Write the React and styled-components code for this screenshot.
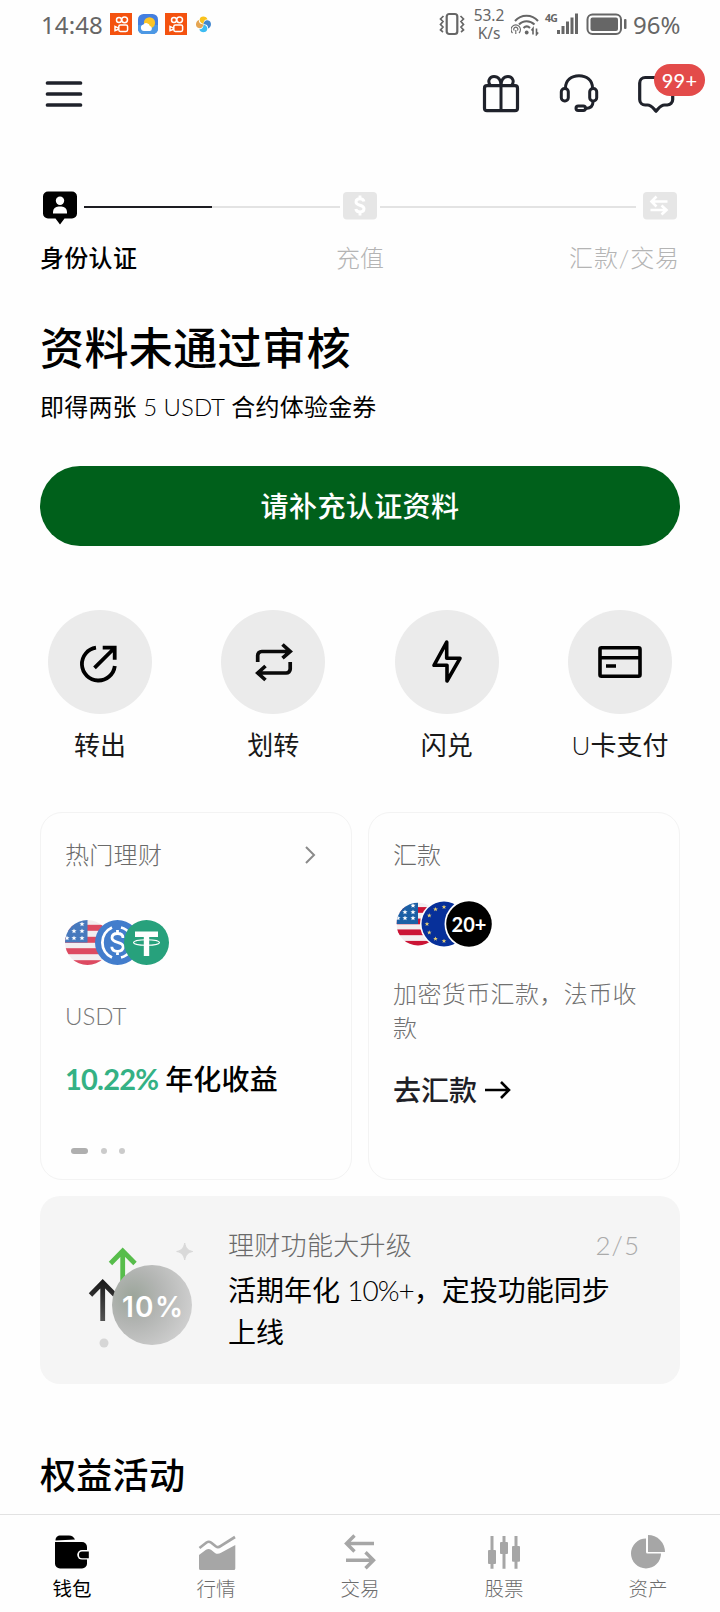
import React from "react";
import styled, { createGlobalStyle } from "styled-components";

const GlobalStyle = createGlobalStyle`
  * { box-sizing: border-box; }
  body {
    margin: 0;
    background: #fefefe;
    color: #000;
    font-family: Lato, "Noto Sans CJK SC", sans-serif;
  }
`;

const Screen = styled.div`
  width: 720px;
  height: 1612px;
  display: flex;
  flex-direction: column;
  background: #fefefe;
  overflow: hidden;
`;

const Text = styled.div`
  font-size: ${(p) => p.$size || 24}px;
  line-height: ${(p) => p.$line || 34}px;
  font-weight: ${(p) => p.$weight || 400};
  letter-spacing: ${(p) => p.$track || 0}px;
  color: ${(p) => p.$color || "#000"};
  white-space: nowrap;
`;

/* Status bar */
const StatusBar = styled.div`
  height: 48px;
  padding: 0 38px 0 41px;
  display: flex;
  align-items: center;
  justify-content: space-between;
  color: #666;
  font-family: "Noto Sans", sans-serif;
  font-size: 24px;
`;
const StatusGroup = styled.div`
  display: flex;
  align-items: center;
  gap: ${(p) => p.$gap}px;
`;
const Clock = styled.span`
  width: 62px;
  letter-spacing: 0.1px;
`;
const Percent = styled.span`
  width: 49px;
`;
const Speed = styled.span`
  width: 32px;
  font-size: 15.5px;
  line-height: 18px;
  letter-spacing: -0.1px;
  text-align: center;
`;

/* Header */
const Header = styled.header`
  height: 92px;
  padding: 0 40px;
  display: flex;
  align-items: center;
  justify-content: space-between;
`;
const HeaderActions = styled.div`
  display: flex;
  gap: 29.5px;
`;
const IconHolder = styled.div`
  position: relative;
  width: 48px;
  height: 48px;
`;
const Badge = styled.span`
  position: absolute;
  left: 22px;
  top: -6px;
  width: 51px;
  height: 32px;
  border-radius: 16px;
  background: #e34b4a;
  color: #fff;
  font-weight: 500;
  font-size: 20px;
  line-height: 32px;
  letter-spacing: 0.2px;
  text-align: center;
`;

const Stepper = styled.section`
  padding: 51px 43px 0;
`;
const StepTrack = styled.div`
  height: 34px;
  display: flex;
  align-items: flex-start;
`;
const StepLine = styled.span`
  flex: 1;
  height: 2px;
  margin: 15px ${(p) => p.$right}px 0 ${(p) => p.$left}px;
  background: linear-gradient(to right, #1d1d22 ${(p) => p.$done}%, #e3e3e3 ${(p) => p.$done}%);
`;
const StepLabels = styled.div`
  margin: 16px -3px 0;
  display: grid;
  grid-template-columns: 1fr auto 1fr;
  & > :last-child { justify-self: end; }
`;

const Hero = styled.section`
  padding: 0 40px;
  margin-top: 43px;
`;
const Title = styled.h1`
  margin: 0;
  font-size: 44px;
  line-height: 60px;
  font-weight: 500;
  letter-spacing: 0.4px;
`;
const Subtitle = styled.p`
  margin: 12px 0 0;
  font-size: 24px;
  line-height: 34px;
  letter-spacing: 0.2px;
`;
const Latin = styled.span`
  font-weight: 300;
  letter-spacing: ${(p) => p.$track || 0}px;
`;
const PrimaryButton = styled.button`
  display: block;
  width: 100%;
  height: 80px;
  margin-top: 42px;
  padding: 0 6px 3px;
  border: 0;
  border-radius: 40px;
  background: #00601b;
  color: #fff;
  font-family: inherit;
  font-size: 28px;
  font-weight: 500;
  letter-spacing: 0.4px;
`;

const Shortcuts = styled.nav`
  margin-top: 64px;
  padding: 0 40px;
  display: flex;
  justify-content: space-between;
`;
const Shortcut = styled.div`
  width: 120px;
  display: flex;
  flex-direction: column;
  align-items: center;
  gap: 13px;
`;
const Disc = styled.div`
  width: 104px;
  height: 104px;
  border-radius: 50%;
  background: #ebebeb;
  display: grid;
  place-items: center;
`;

const Cards = styled.section`
  margin-top: 49px;
  padding: 0 40px;
  display: grid;
  grid-template-columns: 1fr 1fr;
  gap: 16px;
`;
const Card = styled.article`
  height: 368px;
  border: 1.5px solid #f3f3f3;
  border-radius: 22px;
  padding: 25px 24px 0;
  display: flex;
  flex-direction: column;
`;
const CardHead = styled.div`
  display: flex;
  justify-content: space-between;
  align-items: center;
  padding-right: 11px;
`;
const Coins = styled.svg`
  display: block;
  margin: ${(p) => p.$top}px 0 0 ${(p) => p.$left}px;
`;
const Spaced = styled.div`
  margin-top: ${(p) => p.$top}px;
  display: flex;
  align-items: center;
  gap: ${(p) => p.$gap || 0}px;
`;
const Pager = styled.div`
  margin: 49px 0 0 6px;
  display: flex;
`;
const Dot = styled.span`
  width: ${(p) => (p.$active ? 17 : 6)}px;
  height: 6px;
  margin-right: 12.5px;
  border-radius: 3px;
  background: ${(p) => (p.$active ? "#afafaf" : "#cbcbcb")};
`;

const Banner = styled.section`
  height: 188px;
  margin: 16px 40px 0;
  padding: 32px 40px 0;
  border-radius: 20px;
  background: #f5f5f5;
  display: flex;
`;
const BannerArt = styled.svg`
  flex: none;
  margin: 8px 28px 0 0;
`;
const BannerBody = styled.div`
  flex: 1;
`;
const BannerHead = styled.div`
  display: flex;
  justify-content: space-between;
`;

const SectionTitle = styled.h2`
  margin: 66px 40px 0;
  font-size: 36px;
  line-height: 50px;
  font-weight: 500;
  letter-spacing: 0.3px;
`;

const TabBar = styled.nav`
  margin-top: auto;
  height: 98px;
  border-top: 1px solid #e2e2e2;
  display: grid;
  grid-template-columns: repeat(5, 1fr);
`;
const Tab = styled.div`
  padding-top: 17px;
  display: flex;
  flex-direction: column;
  align-items: center;
`;

function VideoAppIcon() {
  return (
    <svg width="22" height="22" viewBox="0 0 22 22">
      <rect width="22" height="22" fill="#f4520f" />
      <g fill="none" stroke="#fff" strokeWidth="1.5">
        <circle cx="9" cy="7" r="2.5" />
        <circle cx="14.6" cy="6.8" r="2.9" />
        <rect x="8.8" y="12" width="8.8" height="6.4" rx="1.6" />
        <path d="M8.5 15.2L5 13.4v4.3l3.5-1.5" />
      </g>
    </svg>
  );
}
function WeatherIcon() {
  return (
    <svg width="20" height="20" viewBox="0 0 20 20">
      <rect width="20" height="20" rx="5.5" fill="#437fe0" />
      <path d="M0 11h20v3.500a5.500 5.500 0 0 1-5.500 5.500h-9A5.500 5.500 0 0 1 0 14.500z" fill="#4c98e4" />
      <circle cx="11.500" cy="8.800" r="5.600" fill="#fcc526" />
      <path d="M6 17a3.300 3.300 0 0 1-.6-6.500 3.700 3.700 0 0 1 6.500 1.500 2.600 2.600 0 0 1 .2 5z" fill="#fff" />
    </svg>
  );
}
function PinwheelIcon() {
  return (
    <svg width="19" height="17" viewBox="-2 0 19 17">
      <path d="M8.500 8C5 7 3.500 4 5.500 1.500 7.500-.5 12 .3 12.500 3.500 10 3 8.500 5 8.500 8z" fill="#f9c21c" />
      <path d="M8.500 8c.5-3.500 3.500-4.800 6-3 2.500 2 1.700 6.500-1.500 7.500C13.500 9.800 11.500 8.300 8.500 8z" fill="#3f86d0" />
      <path d="M8.500 8.500c3.500 1 5 4 3 6.500-2 2-6.500 1.500-7.200-1.800C7 13.500 8.500 11.500 8.500 8.500z" fill="#3dbcf2" />
      <path d="M8.500 8.500C8 12 5 13 2.500 11.500 0 9.500.8 5 4 4 3.500 6.700 5.500 8.200 8.500 8.500z" fill="#e5a552" />
    </svg>
  );
}
function VibrateIcon() {
  return (
    <svg width="28" height="24" viewBox="0 0 28 24" fill="none" stroke="#666" strokeWidth="2">
      <rect x="7.700" y="2" width="10.600" height="20" rx="2.500" strokeWidth="2.200" />
      <path d="M4.500 4L1.500 7l2.500 2.500-2.500 3 2.500 2.500-2.500 3 2.500 2M21.500 4l3 3-2.500 2.500 2.500 3-2.500 2.500 2.500 3-2.500 2" strokeWidth="1.700" />
    </svg>
  );
}
function WifiIcon() {
  return (
    <svg width="28" height="24" viewBox="0 0 28 24" fill="none" stroke="#666" strokeWidth="2">
      <path d="M4 9C10 2 21 2 27 9M8 12.500c4-4.500 11-4.500 15.500 0M12.500 16c2-2 4.500-2 6.500 0" />
      <circle cx="15.700" cy="20.500" r="1.900" fill="#666" stroke="none" />
      <g strokeWidth="1.100">
        <path d="M1.500 21a4.700 4.700 0 1 1 6.500 0M3.300 18.500a2 2 0 1 1 3 0M4.800 18v4" />
        <path d="M22 22.500v-6l-1.500 2M25.500 16.500v6l1.700-2" strokeWidth="1.600" />
      </g>
    </svg>
  );
}
const Carrier = styled.div`
  width: 35px;
  height: 24px;
  display: flex;
  align-items: flex-start;
  font-family: "Noto Sans", sans-serif;
`;
const CarrierTag = styled.span`
  width: 12px;
  font-size: 10.5px;
  line-height: 13px;
  font-weight: 700;
  letter-spacing: -0.8px;
`;
function SignalIcon() {
  return (
    <svg width="22" height="24" viewBox="0 0 22 24" fill="#666">
      <rect x="0" y="18" width="3" height="4" />
      <rect x="4.500" y="14" width="3" height="8" />
      <rect x="9" y="9.500" width="3" height="12.500" />
      <rect x="13.500" y="5.500" width="3" height="16.500" />
      <rect x="18" y="1.500" width="3" height="20.500" />
    </svg>
  );
}
function BatteryIcon() {
  return (
    <svg width="41" height="24" viewBox="0 0 41 24">
      <rect x="1.500" y="2.500" width="33.500" height="19.500" rx="5" fill="none" stroke="#666" strokeWidth="2" />
      <rect x="4.500" y="5.500" width="27.500" height="13.500" rx="2" fill="#666" />
      <rect x="38" y="7" width="2.500" height="10" rx="1" fill="#666" />
    </svg>
  );
}

const LineIcon = styled.svg.attrs({ width: 48, height: 48, viewBox: "0 0 48 48" })`
  display: block;
  fill: none;
  stroke: ${(p) => p.$color || "#1f222b"};
  stroke-width: ${(p) => p.$stroke || 3.2};
`;

function PersonStep() {
  return (
    <svg width="34" height="34" viewBox="0 0 34 34">
      <path d="M5 .5h24a5 5 0 0 1 5 5v17a5 5 0 0 1-5 5h-7.500L17 33.500 12.500 27.500H5a5 5 0 0 1-5-5v-17a5 5 0 0 1 5-5z" />
      <circle cx="17" cy="9.800" r="4.200" fill="#fff" />
      <path d="M10 22.500v-1.500a5.500 5.500 0 0 1 5.500-5.500h3a5.500 5.500 0 0 1 5.500 5.500v1.500z" fill="#fff" />
    </svg>
  );
}
function MoneyStep() {
  return (
    <svg width="34" height="34" viewBox="0 0 34 34">
      <rect y="1" width="34" height="27.500" rx="4" fill="#e6e6e6" />
      <path d="M21 10.500c-.5-2-2-2.700-4-2.700-2.300 0-4 1-4 3.200 0 4.500 8 2 8 6.800 0 2.200-1.800 3.200-4 3.200s-3.800-.9-4.200-3M17 4.500v3.300M17 21v3.500" fill="none" stroke="#fff" strokeWidth="2.900" />
    </svg>
  );
}
function TradeStep() {
  return (
    <svg width="34" height="34" viewBox="0 0 34 34">
      <rect y="1" width="34" height="27.500" rx="4" fill="#e6e6e6" />
      <path d="M24.500 10.500h-15M13.500 5.500l-5 5 5 5M7.500 19h15M18.500 14.500l5 4.500-5 4.500" fill="none" stroke="#fff" strokeWidth="2.600" />
    </svg>
  );
}

const star = "M0-2.600L.7-.8 2.600-.8 1.100.4 1.600 2.200 0 1.200-1.600 2.200-1.100.4-2.600-.8-.7-.8z";

function UsFlag({ cx, cy, r, id, red, blue, stars }) {
  const h = (2 * r) / 7.5;
  return (
    <g>
      <clipPath id={id}><circle cx={cx} cy={cy} r={r} /></clipPath>
      <g clipPath={`url(#${id})`}>
        <rect x={cx - r} y={cy - r} width={2 * r} height={2 * r} fill="#f3eef0" />
        {[0.8, 2.8, 4.700, 6.700].map((n) => (
          <rect key={n} x={cx - r} y={cy - r + n * h} width={2 * r} height={h} fill={red} />
        ))}
        <rect x={cx - r} y={cy - r} width={r} height={r} fill={blue} />
        {stars.map(([x, y], i) => (
          <path key={i} d={star} transform={`translate(${x} ${y})`} fill="#fff" />
        ))}
      </g>
    </g>
  );
}

function EarnCoins() {
  return (
    <Coins width="104" height="46" viewBox="0 0 104 46" $top={48} $left={-0.5}>
      <UsFlag cx={22.500} cy={22.500} r={22.500} id="earn-us" red="#dd4a61" blue="#4779bd"
        stars={[[9, 11], [17, 4], [17, 11], [9, 18], [17, 18], [2, 18]]} />
      <circle cx="52.500" cy="22.500" r="22.500" fill="#427dcc" />
      <g fill="none" stroke="#fff" strokeWidth="2.800">
        <path d="M47 7.500a16.500 16.500 0 0 0 0 30M56 7.500a16.500 16.500 0 0 1 9 6M56 37.500a16.500 16.500 0 0 0 9-6" />
        <path d="M58 18c0-3-2.200-4.500-5.500-4.500s-5.500 1.500-5.500 4.300c0 6.200 11.200 3 11.200 9 0 3-2.500 4.500-5.700 4.500s-5.700-1.500-5.700-4.500M52.500 10v3.500M52.500 31v4" />
      </g>
      <circle cx="81.500" cy="22.500" r="22.500" fill="#27a17c" />
      <path d="M70 11.500h23v5.500h-8.800v19h-5.400V17H70z" fill="#fff" />
      <ellipse cx="81.500" cy="22.500" rx="13" ry="2.800" fill="none" stroke="#fff" strokeWidth="1.100" />
    </Coins>
  );
}
function RemitCoins() {
  const angles = [0, 30, 60, 90, 120, 150, 180, 210, 240, 270, 300, 330];
  return (
    <Coins width="98" height="48" viewBox="0 0 98 48" $top={28} $left={1.500}>
      <UsFlag cx={23} cy={24} r={21.500} id="remit-us" red="#cb1435" blue="#1b5fa5"
        stars={[[10, 12], [18, 5.500], [18, 12], [10, 18], [18, 18], [3, 18]]} />
      <circle cx="49" cy="24" r="24" fill="#fff" />
      <circle cx="49" cy="24" r="22.500" fill="#07309a" />
      {angles.map((a) => (
        <path key={a} d={star} fill="#e8cf74"
          transform={`translate(${49 + 17 * Math.sin((a * Math.PI) / 180)} ${24 - 17 * Math.cos((a * Math.PI) / 180)}) scale(.9)`} />
      ))}
      <circle cx="74" cy="24" r="24.500" fill="#fff" />
      <circle cx="74" cy="24" r="22.800" fill="#000" />
      <text x="74" y="31.500" textAnchor="middle" fill="#fff" fontSize="20" fontWeight="700">20+</text>
    </Coins>
  );
}

const shortcuts = [
  ["转出", <LineIcon key="o" $color="#000" $stroke={3.8}><path d="M20 9.700A16.500 16.500 0 1 0 38.800 28M18.500 29.800L38 10.500M26.700 9.700h12v12" /></LineIcon>],
  ["划转", <LineIcon key="s" $color="#0a0a0a" $stroke={3.7}><path d="M8.700 24v-6.500a4 4 0 0 1 4-4H41M33.500 6.500l7.700 7-7.700 6.700M41.200 24v7a4 4 0 0 1-4 4H9M16.500 28l-7.700 7 7.700 7" /></LineIcon>],
  ["闪兑", <LineIcon key="f" $color="#000" $stroke={3.6} strokeLinejoin="round"><path d="M23.700 4L11 27.300h13v15.700L37 20.300H23.700z" /></LineIcon>],
  [<><Latin>U</Latin>卡支付</>, <LineIcon key="c" $color="#000" $stroke={3.600}><rect x="4" y="9.700" width="40" height="28.600" rx="1.500" /><path d="M4 19.700h40M10 28h10" /></LineIcon>],
];

const TabIcon = styled.svg.attrs({ width: 40, height: 40, viewBox: "0 0 40 40" })`
  display: block;
`;
const tabs = [
  ["钱包", <TabIcon key="w">
    <path d="M3.500 8.500C3.500 5 5.500 3.500 8.500 3.500h8.500c3 0 4.500 1.500 6 4z" />
    <path d="M3 10h27a5 5 0 0 1 5 5v16.500a5 5 0 0 1-5 5H8a5 5 0 0 1-5-5z" />
    <path d="M38 18h-8a4.800 4.800 0 0 0 0 9.600h8z" fill="#fefefe" />
    <path d="M30 19.500h6.800v6.800H30a3 3 0 0 1-3-3v-.8a3 3 0 0 1 3-3z" />
  </TabIcon>],
  ["行情", <TabIcon key="m">
    <path d="M3.500 16l7-5.500c1.500-1 3-1 4.500 0l5 4c1.500 1 3 .8 4.500-.3L39 5" fill="none" stroke="#a6a6a6" strokeWidth="2.700" />
    <path d="M3 23l7-5.200c2-1.200 3.500-1 5 0l4 3.200c2 1.300 4 1 6-.3L39.300 13v23.500a1.500 1.500 0 0 1-1.500 1.500H4.500A1.500 1.500 0 0 1 3 36.500z" fill="#a6a6a6" />
  </TabIcon>],
  ["交易", <TabIcon key="t" fill="none" stroke="#a6a6a6" strokeWidth="3.400">
    <path d="M34 11.500H8M14.500 3.500l-8 8 8 8M6 28.300h26M25.500 20.300l8 8-8 8" />
  </TabIcon>],
  ["股票", <TabIcon key="s" fill="#a6a6a6">
    <path d="M6.500 4h3v32.700h-3zM18.500 4h3v32.700h-3zM30.500 4h3v32.700h-3z" />
    <rect x="4" y="18" width="8" height="14" rx="1" /><rect x="16" y="10" width="8" height="12" rx="1" /><rect x="28" y="14" width="8" height="15.700" rx="1" />
  </TabIcon>],
  ["资产", <TabIcon key="a" fill="#a6a6a6">
    <path d="M18 6.500a15 15 0 1 0 15 15H19.500a1.500 1.500 0 0 1-1.500-1.500z" />
    <path d="M20 3a17 17 0 0 1 17 17H20z" />
  </TabIcon>],
];

const BallText = styled.text`
  font-family: Inter, sans-serif;
  font-size: 28px;
  font-weight: 600;
  fill: #fff;
  text-anchor: middle;
`;

function UpgradeArt() {
  return (
    <BannerArt width="120" height="116" viewBox="0 0 120 116">
      <defs>
        <radialGradient id="ball" cx="26%" cy="40%" r="75%">
          <stop offset="0" stopColor="#9ba59a" />
          <stop offset=".45" stopColor="#b3b5b3" />
          <stop offset="1" stopColor="#cecece" />
        </radialGradient>
        <linearGradient id="ink" x1="0" y1="42" x2="0" y2="86" gradientUnits="userSpaceOnUse">
          <stop offset="0" stopColor="#161616" />
          <stop offset="1" stopColor="#555" />
        </linearGradient>
      </defs>
      <path d="M42.700 50V15M30.500 27.500l12.200-12.500L55 27.500" fill="none" stroke="#57bd4b" strokeWidth="4.800" />
      <path d="M22.700 85V46M10.500 59l12.200-12.500L35 59" fill="none" stroke="url(#ink)" strokeWidth="4.800" />
      <circle cx="72" cy="69" r="40" fill="url(#ball)" />
      <path d="M104.700 7c1 5 3 7.500 8 8.500-5 1-7 3.500-8 8.500-1-5-3-7.500-8-8.500 5-1 7-3.500 8-8.500z" fill="#d9d9d9" stroke="#d9d9d9" />
      <circle cx="24" cy="107" r="4.500" fill="#d6d6d6" />
      <BallText x="72.500" y="81" textLength="61">10%</BallText>
    </BannerArt>
  );
}

export default function App() {
  return (
    <Screen>
      <GlobalStyle />
      <StatusBar>
        <StatusGroup $gap={6.5}>
          <Clock>14:48</Clock>
          <VideoAppIcon />
          <WeatherIcon />
          <VideoAppIcon />
          <PinwheelIcon />
        </StatusGroup>
        <StatusGroup $gap={6}>
          <VibrateIcon />
          <Speed>53.2 K/s</Speed>
          <WifiIcon />
          <Carrier><CarrierTag>4G</CarrierTag><SignalIcon /></Carrier>
          <BatteryIcon />
          <Percent>96%</Percent>
        </StatusGroup>
      </StatusBar>

      <Header>
        <LineIcon $stroke={3.7} strokeLinecap="round"><path d="M7.500 13h33M7.500 24h33M7.500 35h33" /></LineIcon>
        <HeaderActions>
          <LineIcon><rect x="7.500" y="15.700" width="33" height="25" rx="2.500" /><path d="M24 15.700v25M13.500 15.500C10 11.500 12.500 6.500 17 6.500s7 3.500 7 9c0-5.500 2.500-9 7-9s7 5 3.500 9" strokeWidth="3" /></LineIcon>
          <LineIcon $stroke={3}>
            <path d="M10.500 18C10.500 10 16.500 5.700 24 5.700S37.500 10 37.500 18M38 31.500c0 4-2.500 6.800-7 7" />
            <rect x="6.300" y="18.500" width="7" height="12.500" rx="3.300" />
            <rect x="34.700" y="18.500" width="7" height="12.500" rx="3.300" />
            <rect x="21" y="36" width="9.500" height="4.500" rx="2.200" />
          </LineIcon>
          <IconHolder>
            <LineIcon strokeLinejoin="round"><path d="M7.700 13a5.500 5.500 0 0 1 5.500-5.500h22a5.500 5.500 0 0 1 5.500 5.500v16.500a5.500 5.500 0 0 1-5.500 5.500h-2.700c-4 0-5.500 3-8.500 6.200-3-3.200-4.500-6.200-8.500-6.200h-2.300a5.500 5.500 0 0 1-5.500-5.500z" /></LineIcon>
            <Badge>99+</Badge>
          </IconHolder>
        </HeaderActions>
      </Header>

      <Stepper>
        <StepTrack>
          <PersonStep />
          <StepLine $left={7} $right={3} $done={50} />
          <MoneyStep />
          <StepLine $left={3} $right={7} $done={0} />
          <TradeStep />
        </StepTrack>
        <StepLabels>
          <Text $weight={500} $track={0.3}>身份认证</Text>
          <Text $weight={300} $color="#b4b4b4">充值</Text>
          <Text $weight={300} $color="#b4b4b4" $track={0.9}>汇款/交易</Text>
        </StepLabels>
      </Stepper>

      <Hero>
        <Title>资料未通过审核</Title>
        <Subtitle>即得两张 <Latin>5 USDT</Latin> 合约体验金券</Subtitle>
        <PrimaryButton>请补充认证资料</PrimaryButton>
      </Hero>

      <Shortcuts>
        {shortcuts.map(([label, icon]) => (
          <Shortcut key={icon.key}>
            <Disc>{icon}</Disc>
            <Text $size={26} $line={36} $color="#181818">{label}</Text>
          </Shortcut>
        ))}
      </Shortcuts>

      <Cards>
        <Card>
          <CardHead>
            <Text $weight={300} $color="#6a6a6a" $track={0.3}>热门理财</Text>
            <svg width="11" height="18" viewBox="0 0 11 18" fill="none" stroke="#8a8a8a" strokeWidth="2"><path d="M1 1l8 8-8 8" /></svg>
          </CardHead>
          <EarnCoins />
          <Spaced $top={33}><Text $weight={300} $color="#777">USDT</Text></Spaced>
          <Spaced $top={26} $gap={7}>
            <Text $size={29} $line={40} $weight={700} $color="#34b184" $track={-0.8}>10.22%</Text>
            <Text $size={28} $line={40} $weight={500} $track={0.2}>年化收益</Text>
          </Spaced>
          <Pager><Dot $active /><Dot /><Dot /></Pager>
        </Card>
        <Card>
          <Text $weight={300} $color="#6a6a6a">汇款</Text>
          <RemitCoins />
          <Spaced $top={29}>
            <Text $weight={300} $color="#707070" $track={0.4}>加密货币汇款，法币收<br />款</Text>
          </Spaced>
          <Spaced $top={25} $gap={8}>
            <Text $size={28} $line={40} $weight={500} $color="#1f1f27">去汇款</Text>
            <svg width="26" height="18" viewBox="0 0 26 18" fill="none" stroke="#000" strokeWidth="2.600"><path d="M0 9h24M16 1l8 8-8 8" /></svg>
          </Spaced>
        </Card>
      </Cards>

      <Banner>
        <UpgradeArt />
        <BannerBody>
          <BannerHead>
            <Text $size={26} $weight={300} $color="#6a6a6a" $track={0.3}>理财功能大升级</Text>
            <Text $size={26} $weight={300} $color="#aaa" $track={1}>2/5</Text>
          </BannerHead>
          <Spaced $top={7}>
            <Text $size={28} $line={42}>活期年化 <Latin $track={-1}>10%+</Latin>，定投功能同步<br />上线</Text>
          </Spaced>
        </BannerBody>
      </Banner>

      <SectionTitle>权益活动</SectionTitle>

      <TabBar>
        {tabs.map(([label, icon], i) => (
          <Tab key={label}>
            {icon}
            <Text $size={19.5} $line={34} $weight={i ? 300 : 400} $color={i ? "#6c6c6c" : "#000"}>{label}</Text>
          </Tab>
        ))}
      </TabBar>
    </Screen>
  );
}
